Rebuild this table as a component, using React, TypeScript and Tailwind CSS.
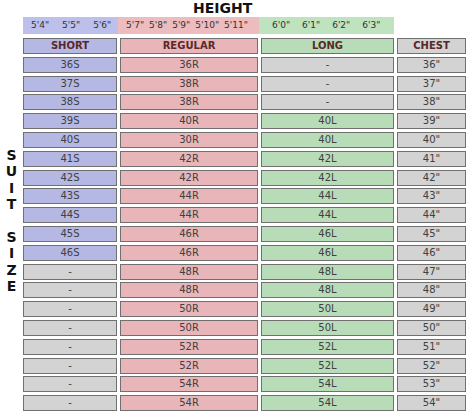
import React from 'react';

type Row = { short: string; regular: string; long: string; chest: string };

const rows: Row[] = [
  { short: '36S', regular: '36R', long: '-', chest: '36"' },
  { short: '37S', regular: '38R', long: '-', chest: '37"' },
  { short: '38S', regular: '38R', long: '-', chest: '38"' },
  { short: '39S', regular: '40R', long: '40L', chest: '39"' },
  { short: '40S', regular: '30R', long: '40L', chest: '40"' },
  { short: '41S', regular: '42R', long: '42L', chest: '41"' },
  { short: '42S', regular: '42R', long: '42L', chest: '42"' },
  { short: '43S', regular: '44R', long: '44L', chest: '43"' },
  { short: '44S', regular: '44R', long: '44L', chest: '44"' },
  { short: '45S', regular: '46R', long: '46L', chest: '45"' },
  { short: '46S', regular: '46R', long: '46L', chest: '46"' },
  { short: '-', regular: '48R', long: '48L', chest: '47"' },
  { short: '-', regular: '48R', long: '48L', chest: '48"' },
  { short: '-', regular: '50R', long: '50L', chest: '49"' },
  { short: '-', regular: '50R', long: '50L', chest: '50"' },
  { short: '-', regular: '52R', long: '52L', chest: '51"' },
  { short: '-', regular: '52R', long: '52L', chest: '52"' },
  { short: '-', regular: '54R', long: '54L', chest: '53"' },
  { short: '-', regular: '54R', long: '54L', chest: '54"' },
];

const cell = 'h-[16px] flex items-center justify-center border border-[#707070] text-[10px] leading-none';
const blue = 'bg-[#b5b8e3]';
const pink = 'bg-[#e8b6b9]';
const green = 'bg-[#b8dcb8]';
const grey = 'bg-[#d3d3d3]';

const sideLetters = ['S', 'U', 'I', 'T', '', 'S', 'I', 'Z', 'E'];

const App: React.FC = () => {
  return (
    <div
      className="w-[474px] h-[417px] bg-white text-[#404040] flex flex-col overflow-hidden"
      style={{ fontFamily: '"DejaVu Sans", Verdana, sans-serif' }}
    >
      <div className="h-[17px] pl-[193px] text-[14px] font-bold leading-[17px] text-[#111]">HEIGHT</div>

      <div className="ml-[23px] flex h-[17px] text-[9px] text-[#333]">
        <div className="w-[95px] bg-[#bcc0ea] flex items-center pl-[8px] gap-[13px]">
          <span>5'4"</span>
          <span>5'5"</span>
          <span>5'6"</span>
        </div>
        <div className="w-[141px] bg-[#ecbcbf] flex items-center pl-[8px] gap-[5px]">
          <span>5'7"</span>
          <span>5'8"</span>
          <span>5'9"</span>
          <span>5'10"</span>
          <span>5'11"</span>
        </div>
        <div className="w-[135px] bg-[#bfe2bf] flex items-center pl-[13px] gap-[12px]">
          <span>6'0"</span>
          <span>6'1"</span>
          <span>6'2"</span>
          <span>6'3"</span>
        </div>
      </div>

      <div className="mt-[4px] flex">
        <div className="w-[23px] pt-[109px] flex flex-col items-center text-[14px] font-bold leading-[16.4px] text-[#111]">
          {sideLetters.map((l, i) => (
            <span key={i} className="h-[16.4px]">{l}</span>
          ))}
        </div>

        <div className="grid grid-cols-[94px_138px_133px_69px] gap-x-[3px] gap-y-[2.8px]">
          <div className={`${cell} ${blue} font-bold text-[#5a2828]`}>SHORT</div>
          <div className={`${cell} ${pink} font-bold text-[#5a2828]`}>REGULAR</div>
          <div className={`${cell} ${green} font-bold text-[#5a2828]`}>LONG</div>
          <div className={`${cell} ${grey} font-bold text-[#5a2828]`}>CHEST</div>
          {rows.map((r, i) => (
            <React.Fragment key={i}>
              <div className={`${cell} ${r.short === '-' ? grey : blue}`}>{r.short}</div>
              <div className={`${cell} ${pink}`}>{r.regular}</div>
              <div className={`${cell} ${r.long === '-' ? grey : green}`}>{r.long}</div>
              <div className={`${cell} ${grey}`}>{r.chest}</div>
            </React.Fragment>
          ))}
        </div>
      </div>
    </div>
  );
};

export default App;
